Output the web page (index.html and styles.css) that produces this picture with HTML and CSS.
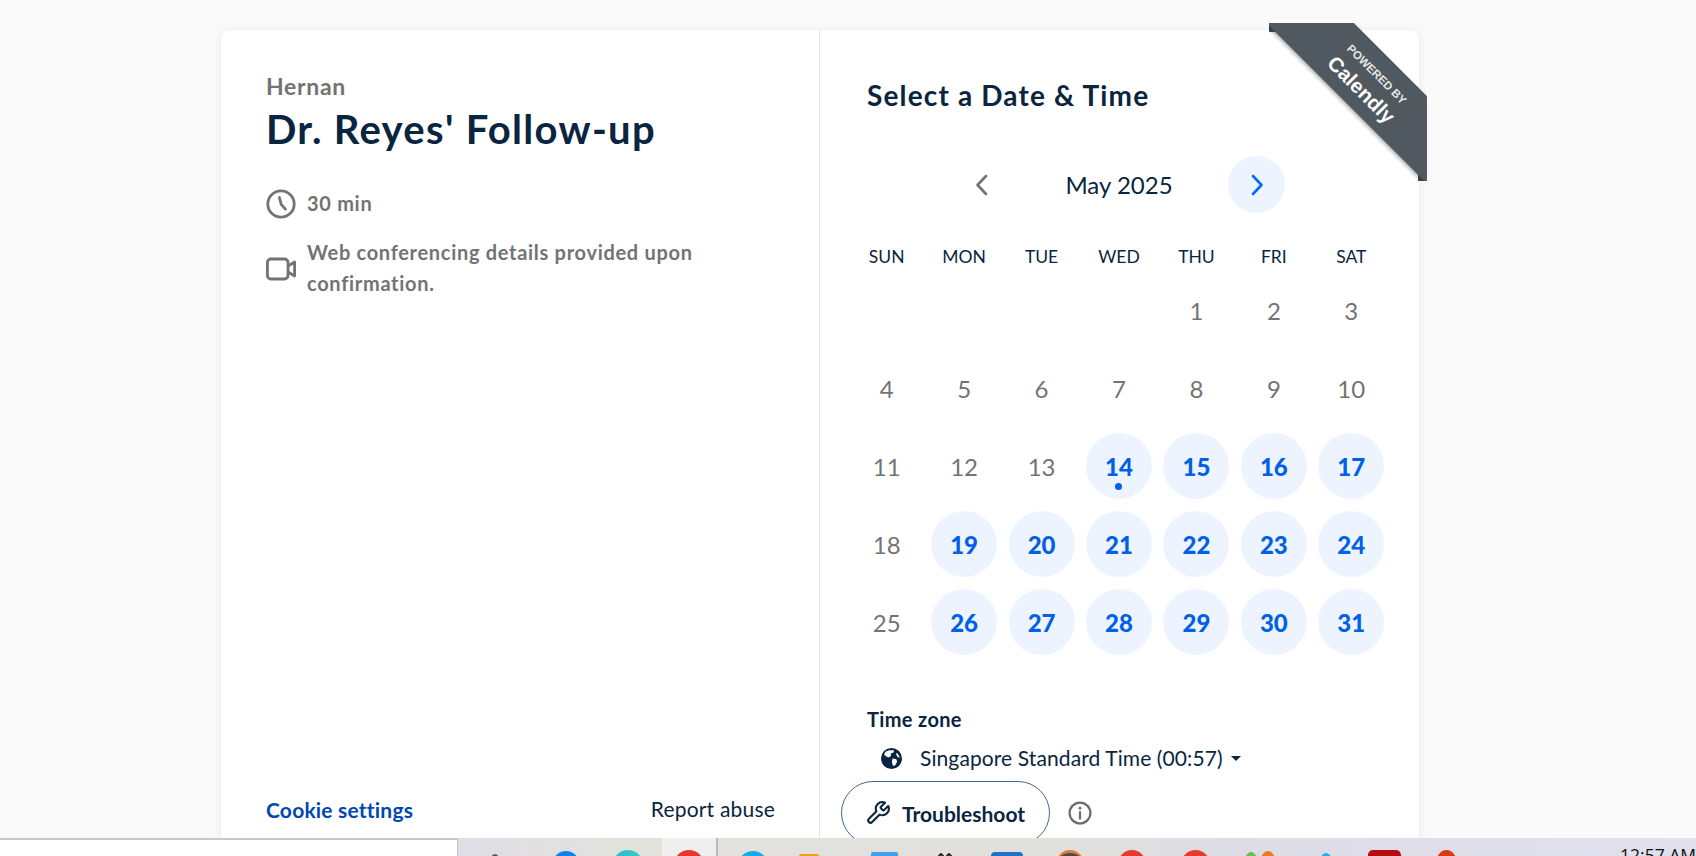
FILE: index.html
```html
<!DOCTYPE html>
<html lang="en">
<head>
    <meta charset="UTF-8">
    <title>Select a Date &amp; Time - Calendly</title>
    <link rel="stylesheet" href="styles.css">
</head>
<body>

    <div class="page">
        <div class="card">

            <!-- Event details -->
            <div class="details">
                <div class="details-top">
                    <div class="host">Hernan</div>
                    <h1>Dr. Reyes' Follow-up</h1>
                    <div class="meta meta-time">
                        <svg class="meta-icon" viewBox="0 0 30 30" fill="none" stroke="#737373" stroke-width="2.8" stroke-linecap="round"><circle cx="15" cy="15" r="13.2"/><path d="M13.4 8.5 L15.2 15.4 L19.4 20.2"/></svg>
                        <span>30 min</span>
                    </div>
                    <div class="meta">
                        <svg class="meta-icon" viewBox="0 0 30 30" fill="none" stroke="#737373" stroke-width="2.8" stroke-linejoin="round"><rect x="1.4" y="6" width="20.6" height="20" rx="3.5"/><path d="M22 13 L28.6 9 V23 L22 19"/></svg>
                        <span>Web conferencing details provided upon confirmation.</span>
                    </div>
                </div>
                <div class="details-foot">
                    <a class="cookie">Cookie settings</a>
                    <a class="report">Report abuse</a>
                </div>
            </div>

            <!-- Calendar -->
            <div class="picker">
                <h2>Select a Date &amp; Time</h2>

                <div class="cal">
                    <div class="month-nav">
                        <button class="nav-btn">
                            <svg viewBox="0 0 16 24" fill="none" stroke="#737373" stroke-width="2.6" stroke-linecap="round" stroke-linejoin="round"><path d="M12 3 L3.5 12 L12 21"/></svg>
                        </button>
                        <div class="month">May 2025</div>
                        <button class="nav-btn nav-active">
                            <svg viewBox="0 0 16 24" fill="none" stroke="#006bff" stroke-width="2.6" stroke-linecap="round" stroke-linejoin="round"><path d="M4 3 L12.5 12 L4 21"/></svg>
                        </button>
                    </div>

                    <div class="grid weekdays">
                        <div>SUN</div><div>MON</div><div>TUE</div><div>WED</div><div>THU</div><div>FRI</div><div>SAT</div>
                    </div>

                    <div class="grid days">
                        <div></div><div></div><div></div><div></div>
                        <div class="day">1</div><div class="day">2</div><div class="day">3</div>
                        <div class="day">4</div><div class="day">5</div><div class="day">6</div><div class="day">7</div><div class="day">8</div><div class="day">9</div><div class="day">10</div>
                        <div class="day">11</div><div class="day">12</div><div class="day">13</div>
                        <div class="day open today">14</div><div class="day open">15</div><div class="day open">16</div><div class="day open">17</div>
                        <div class="day">18</div>
                        <div class="day open">19</div><div class="day open">20</div><div class="day open">21</div><div class="day open">22</div><div class="day open">23</div><div class="day open">24</div>
                        <div class="day">25</div>
                        <div class="day open">26</div><div class="day open">27</div><div class="day open">28</div><div class="day open">29</div><div class="day open">30</div><div class="day open">31</div>
                    </div>
                </div>

                <div class="tz-label">Time zone</div>
                <div class="tz">
                    <svg class="globe" viewBox="0 0 20 20"><circle cx="10" cy="10" r="10" fill="#0a2540"/><path d="M5 3.2 C7 2 10 1.8 12.5 2.4 L11.6 4.6 L9.2 5.2 L9.6 7.6 L7 9 L4.4 7.6 L3 6.4 C3.4 5 4 4 5 3.2 Z M11 10 L14.6 10.6 L15.4 13 L13.4 16.6 L11.4 17 L10.4 13.6 Z M15 4.6 C16.6 6 17.6 8 17.8 9.6 L15.6 8.4 L14.4 6 Z" fill="#fff"/></svg>
                    <span>Singapore Standard Time (00:57)</span>
                    <span class="caret"></span>
                </div>

                <div class="trouble-row">
                    <button class="trouble">
                        <svg viewBox="0 0 24 24" fill="none" stroke="#0a2540" stroke-width="1.9" stroke-linejoin="round" stroke-linecap="round"><path d="M14.7 6.3a1 1 0 0 0 0 1.4l1.6 1.6a1 1 0 0 0 1.4 0l3.77-3.77a6 6 0 0 1-7.94 7.94l-6.91 6.91a2.12 2.12 0 0 1-3-3l6.91-6.91a6 6 0 0 1 7.94-7.94l-3.76 3.76z"/></svg>
                        Troubleshoot
                    </button>
                    <svg class="info" viewBox="0 0 24 24" fill="none" stroke="#6b6b6b" stroke-width="2.2"><circle cx="12" cy="12" r="10.4"/><path d="M12 11 V17.6" stroke-linecap="round"/><circle cx="12" cy="7.2" r="1.4" fill="#6b6b6b" stroke="none"/></svg>
                </div>
            </div>

            <!-- Corner ribbon -->
            <div class="ribbon-wrap">
                <div class="fold fold-left"></div>
                <div class="fold fold-right"></div>
                <div class="ribbon">
                    <div class="ribbon-small">POWERED BY</div>
                    <div class="ribbon-name">Calendly</div>
                </div>
            </div>
        </div>
    </div>

    <!-- Windows taskbar peeking in at the bottom -->
    <div class="taskbar">
        <div class="search-box"></div>
        <div class="tray">
            <i class="tb tb-search"></i>
            <i class="tb tb-blue"></i>
            <i class="tb tb-teal"></i>
            <div class="tb-active"><i class="tb tb-red-active"></i></div>
            <i class="tb-sep"></i>
            <i class="tb tb-sky"></i>
            <i class="tb tb-yellow"></i>
            <i class="tb tb-square"></i>
            <i class="tb tb-dots"></i>
            <i class="tb tb-fb"></i>
            <i class="tb tb-brown"></i>
            <i class="tb tb-red-1"></i>
            <i class="tb tb-red-2"></i>
            <i class="tb tb-green"></i>
            <i class="tb tb-flame"></i>
            <i class="tb tb-sky-small"></i>
            <i class="tb tb-crimson"></i>
            <i class="tb tb-orange"></i>
            <span class="clock">12:57 AM</span>
        </div>
    </div>

</body>
</html>
```

FILE: styles.css
```css
* {
    margin: 0;
    padding: 0;
    box-sizing: border-box;
}

html, body {
    height: 100%;
    overflow: hidden;
}

body {
    font-family: "Lato", "Liberation Sans", sans-serif;
    background: #fafafa;
    color: #0a2540;
    position: relative;
}

.page {
    height: 838px;
    overflow: hidden;
    padding: 30px 277px 0 221px;
}

.card {
    position: relative;
    display: flex;
    height: 900px;
    background: #fff;
    border-radius: 8px;
    box-shadow: 0 1px 8px rgba(0, 0, 0, 0.08);
}

/* left column */
.details {
    flex: none;
    width: 599px;
    height: 808px;
    border-right: 1px solid #e5e5e5;
    padding: 42px 44px 0 45px;
    display: flex;
    flex-direction: column;
    justify-content: space-between;
}

.host {
    font-size: 23px;
    font-weight: 700;
    line-height: 28px;
    letter-spacing: 0.7px;
    color: #737373;
}

h1 {
    font-size: 40px;
    font-weight: 700;
    line-height: 48px;
    letter-spacing: 1.3px;
    color: #0a2540;
    margin-top: 5px;
}

.meta {
    display: flex;
    align-items: center;
    gap: 11px;
    font-size: 20px;
    font-weight: 700;
    line-height: 31.5px;
    letter-spacing: 0.7px;
    color: #737373;
    margin-top: 10px;
}

.meta-time {
    margin-top: 35px;
    margin-bottom: 17px;
}

.meta-icon {
    width: 30px;
    height: 30px;
    flex: none;
}

.details-foot {
    display: flex;
    justify-content: space-between;
    align-items: center;
    height: 46px;
    margin-bottom: 6px;
    font-size: 21px;
    letter-spacing: 0.2px;
}

.cookie {
    color: #0047b3;
    font-weight: 700;
}

.report {
    color: #0a2540;
    margin-top: -2px;
}

/* right column */
.picker {
    flex: none;
    width: 599px;
    padding: 47px 0 0 47px;
}

h2 {
    font-size: 28px;
    font-weight: 700;
    line-height: 36px;
    letter-spacing: 1.15px;
    color: #0a2540;
}

.cal {
    width: 542px;
    margin-left: -19px;
}

.month-nav {
    display: flex;
    align-items: center;
    justify-content: center;
    gap: 41px;
    margin-top: 43px;
}

.nav-btn {
    width: 57px;
    height: 57px;
    border: none;
    border-radius: 50%;
    background: none;
    display: flex;
    align-items: center;
    justify-content: center;
}

.nav-btn svg {
    width: 16px;
    height: 24px;
}

.nav-active {
    background: #edf4ff;
}

.month {
    font-size: 24px;
    width: 136px;
    text-align: center;
}

.grid {
    display: grid;
    grid-template-columns: repeat(7, 1fr);
    justify-items: center;
}

.weekdays {
    margin-top: 32px;
    font-size: 17.5px;
    line-height: 24px;
}

.days {
    margin-top: 8px;
    row-gap: 12px;
}

.days > div {
    width: 66px;
    height: 66px;
}

.day {
    position: relative;
    display: flex;
    align-items: center;
    justify-content: center;
    border-radius: 50%;
    font-size: 24px;
    color: #737373;
}

.open {
    background: #edf4ff;
    color: #0060e6;
    font-weight: 900;
}

.today::after {
    content: "";
    position: absolute;
    left: 50%;
    bottom: 9px;
    width: 7px;
    height: 7px;
    margin-left: -3.5px;
    border-radius: 50%;
    background: #0060e6;
}

.tz-label {
    margin-top: 52px;
    font-size: 20px;
    font-weight: 700;
    line-height: 24px;
    letter-spacing: 0.35px;
    color: #0a2540;
}

.tz {
    display: flex;
    align-items: center;
    margin-top: 13px;
    padding-left: 14px;
    font-size: 21px;
    line-height: 28px;
    letter-spacing: 0.1px;
}

.globe {
    width: 21px;
    height: 21px;
    margin-right: 18px;
}

.caret {
    margin-left: 8px;
    border-left: 5px solid transparent;
    border-right: 5px solid transparent;
    border-top: 5px solid #0a2540;
}

.trouble-row {
    display: flex;
    align-items: center;
    gap: 18px;
    margin-top: 9px;
    margin-left: -26px;
}

.trouble {
    display: flex;
    align-items: center;
    gap: 11px;
    width: 209px;
    height: 64px;
    padding-left: 23px;
    background: #fff;
    border: 1px solid #476788;
    border-radius: 32px;
    font-family: inherit;
    font-size: 21px;
    font-weight: 700;
    color: #0a2540;
}

.trouble svg {
    width: 26px;
    height: 26px;
}

.info {
    width: 24px;
    height: 24px;
}

/* ribbon */
.ribbon-wrap {
    position: absolute;
    top: -7px;
    right: -8px;
    width: 158px;
    height: 158px;
    overflow: hidden;
}

.fold {
    position: absolute;
    background: #474f55;
}

.fold-left {
    left: 0;
    top: 0;
    width: 7px;
    height: 9px;
}

.fold-right {
    right: 0;
    bottom: 0;
    width: 9px;
    height: 8px;
}

.ribbon {
    position: absolute;
    top: 27.5px;
    left: -20.5px;
    width: 240px;
    height: 62px;
    background: #505960;
    color: #fff;
    text-align: center;
    transform: rotate(45deg);
    box-shadow: 0 2px 4px rgba(0, 0, 0, 0.3);
    font-family: "Liberation Sans", sans-serif;
}

.ribbon-small {
    font-size: 11.5px;
    font-weight: 700;
    line-height: 12px;
    padding-top: 14px;
    color: #e6e6e6;
}

.ribbon-name {
    font-size: 20.5px;
    font-weight: 700;
    line-height: 24px;
    margin-top: 4px;
}

/* taskbar */
.taskbar {
    position: absolute;
    left: 0;
    right: 0;
    top: 838px;
    height: 18px;
    display: flex;
}

.search-box {
    width: 458px;
    background: #fff;
    border-top: 2px solid #c8c8c8;
    border-right: 1px solid #c8c8c8;
}

.tray {
    flex: 1;
    display: flex;
    overflow: hidden;
    background: linear-gradient(90deg, #dfdee6 0, #e3e1dc 12%, #e1e0dd 50%, #dcdce4 62%, #e1e0ef 100%);
}

.tb {
    display: block;
    flex: none;
    height: 34px;
    border-radius: 50%;
}

.tb-search { width: 14px; margin: 16px 0 0 30px; background: #5a5a5a; }
.tb-blue { width: 30px; margin: 13px 0 0 49px; background: #0a84f0; }
.tb-teal { width: 32px; margin: 12px 0 0 31px; background: linear-gradient(90deg, #24b5e8, #3ad6a8); }

.tb-active {
    flex: none;
    display: flex;
    justify-content: center;
    width: 54px;
    margin-left: 18px;
    background: #f0efee;
}

.tb-red-active { width: 32px; margin-top: 12px; background: #e53b2e; }
.tb-sep { flex: none; width: 2px; background: #b9b9b9; }
.tb-sky { width: 32px; margin: 13px 0 0 19px; background: #1ba9ee; }
.tb-yellow { width: 20px; margin: 16px 0 0 30px; background: #e8a317; border-radius: 2px; }
.tb-square { width: 27px; margin: 14px 0 0 52px; background: #3fa0ec; border-radius: 2px; }

.tb-dots {
    width: 14px;
    margin: 15px 0 0 40px;
    border-radius: 0;
    background: radial-gradient(circle at 3px 3px, #333 2.5px, transparent 3px), radial-gradient(circle at 11px 3px, #333 2.5px, transparent 3px);
}

.tb-fb { width: 32px; margin: 14px 0 0 39px; background: #1e73c8; border-radius: 4px; }
.tb-brown { width: 30px; margin: 12px 0 0 32px; background: #4a4a4a; border-top: 3px solid #e07b39; }
.tb-red-1 { width: 30px; margin: 12px 0 0 32px; background: #e53b2e; }
.tb-red-2 { width: 31px; margin: 12px 0 0 33px; background: #e53b2e; }
.tb-green { width: 16px; margin: 14px 0 0 32px; background: #6cc04a; }
.tb-flame { width: 18px; margin: 13px 0 0 0; background: #ee7a1f; }
.tb-sky-small { width: 16px; margin: 15px 0 0 41px; background: #29a9e8; }
.tb-crimson { width: 33px; margin: 12px 0 0 34px; background: #b30f0f; border-radius: 5px; }
.tb-orange { width: 23px; margin: 12px 0 0 34px; background: #d83b10; }

.clock {
    margin-left: auto;
    margin-top: 5px;
    font-family: "Open Sans", sans-serif;
    font-size: 17.5px;
    line-height: 24px;
    white-space: nowrap;
    color: #111;
}
```
